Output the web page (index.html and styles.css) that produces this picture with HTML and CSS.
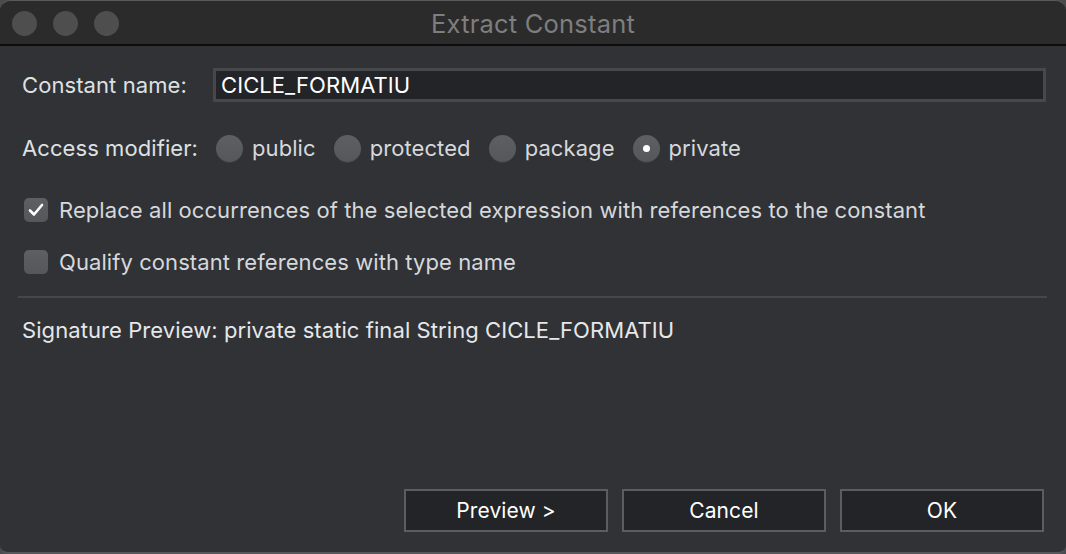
FILE: index.html
```html
<!DOCTYPE html>
<html>
<head>
<meta charset="utf-8">
<link rel="stylesheet" href="styles.css">
</head>
<body>
<div class="window">
  <div class="titlebar">
    <div class="lights">
      <span class="light"></span><span class="light"></span><span class="light"></span>
    </div>
    <div class="title">Extract Constant</div>
  </div>
  <div class="content">
    <div class="row name-row">
      <label class="label">Constant name:</label>
      <div class="input">CICLE_FORMATIU</div>
    </div>
    <div class="row access-row">
      <span class="label">Access modifier:</span>
      <span class="radio"></span><span class="opt">public</span>
      <span class="radio"></span><span class="opt">protected</span>
      <span class="radio"></span><span class="opt">package</span>
      <span class="radio on"></span><span class="opt">private</span>
    </div>
    <div class="row check-row first">
      <span class="check on"><svg width="18" height="16" viewBox="0 0 18 16"><path d="M3 8.5 L7 12.5 L15 3" fill="none" stroke="#fff" stroke-width="2.6" stroke-linecap="round" stroke-linejoin="round"/></svg></span>
      <span class="opt">Replace all occurrences of the selected expression with references to the constant</span>
    </div>
    <div class="row check-row">
      <span class="check"></span>
      <span class="opt">Qualify constant references with type name</span>
    </div>
    <div class="sep"></div>
    <div class="signature">Signature Preview: private static final String CICLE_FORMATIU</div>
    <div class="spacer"></div>
    <div class="buttons">
      <div class="btn">Preview &gt;</div>
      <div class="btn">Cancel</div>
      <div class="btn">OK</div>
    </div>
  </div>
</div>
</body>
</html>
```
FILE: styles.css
```css
html, body {
  margin: 0;
  padding: 0;
  background: #4a4b4d;
  width: 1066px;
  height: 554px;
  overflow: hidden;
}
body {
  font-family: Inter, "Noto Sans", sans-serif;
  letter-spacing: 0.08px;
}
.window {
  width: 1066px;
  height: 554px;
  box-sizing: border-box;
  border-radius: 11px 11px 8px 8px;
  overflow: hidden;
  background: #303236;
  display: flex;
  flex-direction: column;
  border-top: 1px solid #5a5a5a;
  border-bottom: 2px solid #55575a;
}
.titlebar {
  height: 43px;
  background: #2b2b2b;
  border-bottom: 2px solid #0d0d0d;
  display: flex;
  align-items: center;
  position: relative;
  flex-shrink: 0;
}
.lights {
  display: flex;
  gap: 16px;
  padding-left: 12px;
  padding-top: 2px;
}
.light {
  width: 25px;
  height: 25px;
  border-radius: 50%;
  background: #4e4e4e;
}
.title {
  position: absolute;
  left: 0;
  right: 0;
  top: 0;
  bottom: 0;
  display: flex;
  align-items: center;
  justify-content: center;
  padding-top: 2px;
  color: #7e7e7e;
  font-size: 25.5px;
  letter-spacing: 0.2px;
}
.content {
  flex: 1;
  display: flex;
  flex-direction: column;
  padding: 21px 19px 20px 22px;
}
.row {
  display: flex;
  align-items: center;
}
.label {
  color: #dfe0e2;
  font-size: 22px;
}
.name-row {
  height: 36px;
}
.name-row .label {
  width: 191px;
  flex-shrink: 0;
}
.input {
  flex: 1;
  height: 34px;
  box-sizing: border-box;
  border: 3px solid #46484b;
  background: #232427;
  color: #ffffff;
  font-size: 22px;
  display: flex;
  align-items: center;
  padding-left: 5px;
  margin-right: 1px;
}
.access-row {
  margin-top: 30px;
  height: 30px;
}
.access-row .label {
  width: 194px;
  flex-shrink: 0;
}
.radio {
  width: 27px;
  height: 27px;
  border-radius: 50%;
  background: linear-gradient(#5e5f62, #55575a);
  box-shadow: 0 1px 0 #3c3d40;
  position: relative;
  margin-right: 9px;
  flex-shrink: 0;
}
.radio.on::after {
  content: "";
  position: absolute;
  left: 10px;
  top: 10px;
  width: 7px;
  height: 7px;
  border-radius: 50%;
  background: #ffffff;
}
.opt {
  color: #d6d8db;
  font-size: 22px;
}
.access-row .opt {
  margin-right: 18px;
}
.check-row {
  height: 30px;
  padding-left: 2px;
}
.check-row.first {
  margin-top: 32px;
}
.check-row + .check-row {
  margin-top: 22px;
}
.check {
  width: 24px;
  height: 24px;
  border-radius: 5px;
  background: linear-gradient(#5e5f62, #55575a);
  margin-right: 11px;
  display: flex;
  align-items: center;
  justify-content: center;
}
.sep {
  height: 2px;
  background: #45474b;
  margin: 19px 0 0 -4px;
}
.signature {
  margin-top: 19px;
  color: #e6e7e9;
  font-size: 22px;
  height: 26px;
}
.spacer {
  flex: 1;
}
.buttons {
  display: flex;
  justify-content: flex-end;
  gap: 14px;
  margin-right: 3px;
}
.btn {
  width: 204px;
  height: 43px;
  box-sizing: border-box;
  border: 2px solid #5b5d60;
  background: #232427;
  color: #ffffff;
  font-size: 21px;
  display: flex;
  align-items: center;
  justify-content: center;
}
```
